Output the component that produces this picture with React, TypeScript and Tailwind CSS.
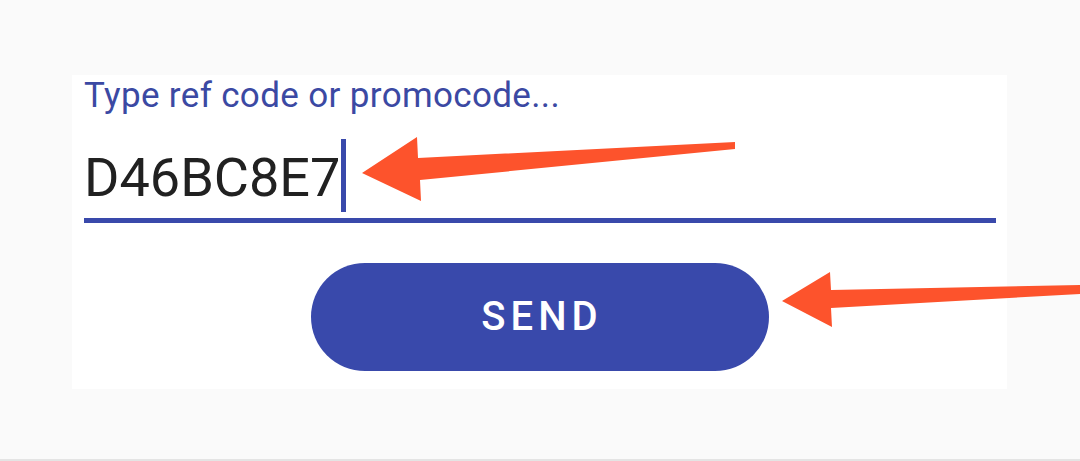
// Promo code entry card with annotation arrows pointing at the field and the button.

const BLUE = "#3949ab";

function Arrows() {
  return (
    <svg
      className="pointer-events-none absolute inset-0"
      width="1080"
      height="461"
      viewBox="0 0 1080 461"
    >
      <polygon
        fill="#fd532c"
        points="362,173 417,137 418,158 735,142 735,149 420,180 421,201"
      />
      <polygon
        fill="#fd532c"
        points="782,301 830,272 831,290 1080,285 1080,294 831,308 832,327"
      />
    </svg>
  );
}

export default function App() {
  return (
    <div
      className="relative h-[461px] w-[1080px] overflow-hidden border-b-2 border-[#e4e4e4] bg-[#fafafa] pt-[75px] pl-[72px]"
      style={{ fontFamily: "Roboto, 'Noto Sans', sans-serif" }}
    >
      <div className="flex h-[314px] w-[935px] flex-col bg-white pl-[12px]">
        <label className="text-[35px] leading-[41px] tracking-[0.35px] text-[#3b49a3]">
          Type ref code or promocode...
        </label>

        <div className="mt-[23px] flex h-[73px] items-start">
          <span className="mt-[6px] text-[54px] leading-[66px] text-[#212121]">
            D46BC8E7
          </span>
          <div className="ml-[1px] h-[73px] w-[5px] bg-[#3949ab]" />
        </div>
        <div className="mt-[6px] h-[5px] w-[912px] bg-[#3949ab]" />

        <button
          className="mx-auto mt-[40px] flex h-[108px] w-[458px] -translate-x-[6px] items-center justify-center rounded-full pl-[5px] text-[40px] font-medium tracking-[5px] text-white"
          style={{ backgroundColor: BLUE }}
        >
          SEND
        </button>
      </div>
      <Arrows />
    </div>
  );
}
